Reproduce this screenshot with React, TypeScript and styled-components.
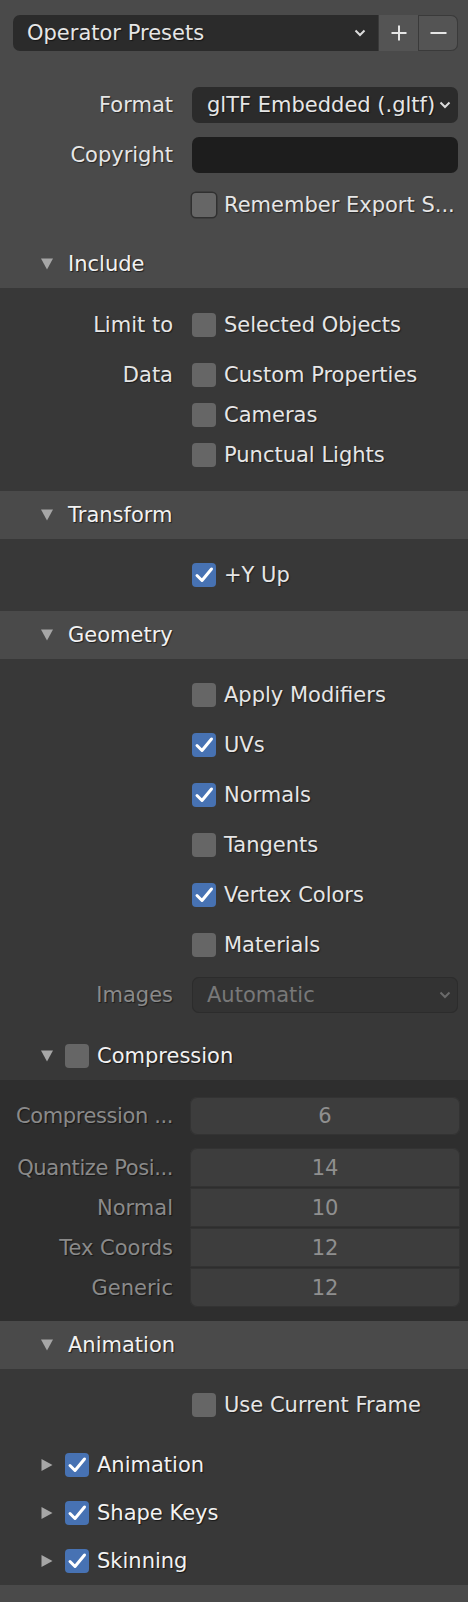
import React from "react";
import styled, { createGlobalStyle, css } from "styled-components";

const GlobalStyle = createGlobalStyle`
  html, body {
    margin: 0;
    padding: 0;
    background: #4a4a4a;
  }
  body {
    font-family: "DejaVu Sans", "Noto Sans", sans-serif;
    font-size: 21px;
    color: #e6e6e6;
  }
`;

const Page = styled.div`
  width: 468px;
  display: flex;
  flex-direction: column;
  background: #4a4a4a;
`;

const TopArea = styled.div`
  padding: 15px 10px 17px 13px;
  display: flex;
  flex-direction: column;
`;

const PresetBar = styled.div`
  display: flex;
  height: 36px;
  margin-bottom: 36px;
`;

const PresetSelect = styled.div`
  flex: 1;
  display: flex;
  align-items: center;
  justify-content: space-between;
  padding: 0 12px 0 14px;
  background: #2b2b2b;
  border-radius: 7px 0 0 7px;
  text-shadow: 1px 1px 1px rgba(0, 0, 0, 0.5);
`;

const PresetButton = styled.div<{ $last?: boolean }>`
  width: 39px;
  display: flex;
  align-items: center;
  justify-content: center;
  background: #545454;
  border-left: 1px solid #3a3a3a;
  ${(p) =>
    p.$last &&
    css`
      border-radius: 0 7px 7px 0;
      box-shadow: inset -1px 0 0 #3a3a3a, inset 0 1px 0 #3a3a3a, inset 0 -1px 0 #3a3a3a;
    `}
`;

const PropRow = styled.div<{ $h?: number; $gap?: number }>`
  display: grid;
  grid-template-columns: 160px 1fr;
  column-gap: 19px;
  align-items: center;
  height: ${(p) => p.$h ?? 36}px;
  margin-bottom: ${(p) => p.$gap ?? 0}px;
`;

const Label = styled.div<{ $disabled?: boolean; $tight?: boolean }>`
  text-align: right;
  white-space: nowrap;
  color: ${(p) => (p.$disabled ? "#8a8a8a" : "#e6e6e6")};
  letter-spacing: ${(p) => (p.$tight ? "-0.4px" : "normal")};
  text-shadow: 1px 1px 1px rgba(0, 0, 0, 0.5);
`;

const Dropdown = styled.div<{ $disabled?: boolean }>`
  height: 36px;
  display: flex;
  align-items: center;
  justify-content: space-between;
  padding: 0 7px 0 15px;
  border-radius: 7px;
  white-space: nowrap;
  background: ${(p) => (p.$disabled ? "#333333" : "#2b2b2b")};
  color: ${(p) => (p.$disabled ? "#787878" : "#e6e6e6")};
  box-shadow: ${(p) => (p.$disabled ? "inset 0 0 0 1px #2c2c2c" : "none")};
  text-shadow: ${(p) => (p.$disabled ? "none" : "1px 1px 1px rgba(0,0,0,0.5)")};
`;

const TextField = styled.div`
  height: 36px;
  border-radius: 7px;
  background: #1d1d1d;
`;

const CheckRow = styled.div<{ $h?: number }>`
  display: flex;
  align-items: center;
  gap: 8px;
  height: ${(p) => p.$h ?? 36}px;
  white-space: nowrap;
  text-shadow: 1px 1px 1px rgba(0, 0, 0, 0.5);
`;

const Box = styled.div<{ $checked?: boolean; $outlined?: boolean }>`
  width: 24px;
  height: 24px;
  flex: none;
  border-radius: 4px;
  display: flex;
  align-items: center;
  justify-content: center;
  background: ${(p) => (p.$checked ? "#4772b3" : "#666666")};
  box-shadow: ${(p) => (p.$outlined ? "0 0 0 1.5px #303030" : "none")};
`;

const SectionHeader = styled.div<{ $light?: boolean }>`
  height: 48px;
  display: flex;
  align-items: center;
  padding-left: 41px;
  background: ${(p) => (p.$light ? "#4a4a4a" : "transparent")};
  color: #f2f2f2;
  text-shadow: 1px 1px 1px rgba(0, 0, 0, 0.6);
  white-space: nowrap;
`;

const HeaderTitle = styled.span<{ $offset: number }>`
  margin-left: ${(p) => p.$offset}px;
`;

const HeaderBox = styled(Box)`
  margin-left: 12px;
`;

const SectionBody = styled.div<{ $bg?: string; $pad?: string }>`
  background: ${(p) => p.$bg ?? "#383838"};
  padding: ${(p) => p.$pad ?? "0"};
  display: flex;
  flex-direction: column;
`;

const FieldArea = styled.div`
  padding: 0 10px 0 13px;
  display: flex;
  flex-direction: column;
`;

const NumberField = styled.div<{ $pos: "single" | "first" | "mid" | "last" }>`
  height: ${(p) => (p.$pos === "single" ? 38 : 39)}px;
  display: flex;
  align-items: center;
  justify-content: center;
  background: #3d3d3d;
  color: #8f8f8f;
  margin-right: -2px;
  margin-left: -2px;
  box-shadow: inset 0 0 0 1px #333333;
  border-radius: ${(p) =>
    p.$pos === "single"
      ? "7px"
      : p.$pos === "first"
      ? "7px 7px 0 0"
      : p.$pos === "last"
      ? "0 0 7px 7px"
      : "0"};
`;

const NumberGroup = styled.div`
  display: flex;
  flex-direction: column;
  gap: 1px;
`;

const Chevron = ({ color = "#dcdcdc" }: { color?: string }) => (
  <svg width="12" height="8" viewBox="0 0 12 8">
    <polyline points="1.5,1.5 6,6 10.5,1.5" fill="none" stroke={color} strokeWidth="2" />
  </svg>
);

const Tick = () => (
  <svg width="24" height="24" viewBox="0 0 24 24">
    <path d="M5 12.5 L10 17.5 L19.5 6" fill="none" stroke="#ffffff" strokeWidth="3" strokeLinecap="round" strokeLinejoin="round" />
  </svg>
);

const Disclosure = ({ open }: { open: boolean }) => (
  <svg width="12" height="12" viewBox="0 0 12 12">
    {open ? <polygon points="0,0.5 12,0.5 6,11.5" fill="#a6a6a6" /> : <polygon points="0.5,0 11.5,6 0.5,12" fill="#a6a6a6" />}
  </svg>
);

function Checkbox({ label, checked, outlined, h }: { label: string; checked?: boolean; outlined?: boolean; h?: number }) {
  return (
    <CheckRow $h={h}>
      <Box $checked={checked} $outlined={outlined}>{checked && <Tick />}</Box>
      {label}
    </CheckRow>
  );
}

function Header({ title, light = true, open = true, toggle }: { title: string; light?: boolean; open?: boolean; toggle?: boolean }) {
  return (
    <SectionHeader $light={light}>
      <Disclosure open={open} />
      {toggle !== undefined && <HeaderBox $checked={toggle}>{toggle && <Tick />}</HeaderBox>}
      <HeaderTitle $offset={toggle !== undefined ? 8 : 15}>{title}</HeaderTitle>
    </SectionHeader>
  );
}

const geometry = [
  { label: "Apply Modifiers", checked: false },
  { label: "UVs", checked: true },
  { label: "Normals", checked: true },
  { label: "Tangents", checked: false },
  { label: "Vertex Colors", checked: true },
  { label: "Materials", checked: false },
];

const quantize = [
  { label: "Quantize Posi...", value: 14 },
  { label: "Normal", value: 10 },
  { label: "Tex Coords", value: 12 },
  { label: "Generic", value: 12 },
];

export default function App() {
  return (
    <Page>
      <GlobalStyle />
      <TopArea>
        <PresetBar>
          <PresetSelect>
            Operator Presets
            <Chevron />
          </PresetSelect>
          <PresetButton>
            <svg width="16" height="16" viewBox="0 0 16 16">
              <path d="M8 0.5 V15.5 M0.5 8 H15.5" stroke="#e6e6e6" strokeWidth="2" />
            </svg>
          </PresetButton>
          <PresetButton $last>
            <svg width="17" height="16" viewBox="0 0 17 16">
              <path d="M0.5 8 H16.5" stroke="#e6e6e6" strokeWidth="2" />
            </svg>
          </PresetButton>
        </PresetBar>
        <PropRow $gap={14}>
          <Label>Format</Label>
          <Dropdown>
            glTF Embedded (.gltf)
            <Chevron />
          </Dropdown>
        </PropRow>
        <PropRow $gap={14}>
          <Label>Copyright</Label>
          <TextField />
        </PropRow>
        <PropRow>
          <span />
          <Checkbox label="Remember Export S..." outlined />
        </PropRow>
      </TopArea>

      <Header title="Include" />
      <SectionBody $pad="17px 10px 16px 13px">
        <PropRow $h={40} $gap={10}>
          <Label>Limit to</Label>
          <Checkbox label="Selected Objects" h={40} />
        </PropRow>
        <PropRow $h={40}>
          <Label>Data</Label>
          <Checkbox label="Custom Properties" h={40} />
        </PropRow>
        <PropRow $h={40}>
          <span />
          <Checkbox label="Cameras" h={40} />
        </PropRow>
        <PropRow $h={40}>
          <span />
          <Checkbox label="Punctual Lights" h={40} />
        </PropRow>
      </SectionBody>

      <Header title="Transform" />
      <SectionBody $pad="16px 10px 16px 13px">
        <PropRow $h={40}>
          <span />
          <Checkbox label="+Y Up" checked h={40} />
        </PropRow>
      </SectionBody>

      <Header title="Geometry" />
      <SectionBody $pad="18px 0 0 0">
        <FieldArea>
          {geometry.map((g) => (
            <PropRow key={g.label} $gap={14}>
              <span />
              <Checkbox label={g.label} checked={g.checked} />
            </PropRow>
          ))}
          <PropRow $gap={19}>
            <Label $disabled>Images</Label>
            <Dropdown $disabled>
              Automatic
              <Chevron color="#6a6a6a" />
            </Dropdown>
          </PropRow>
        </FieldArea>
        <Header title="Compression" light={false} toggle={false} />
        <SectionBody $bg="#2e2e2e" $pad="17px 10px 14px 13px">
          <PropRow $h={38} $gap={13}>
            <Label $disabled $tight>Compression ...</Label>
            <NumberField $pos="single">6</NumberField>
          </PropRow>
          <NumberGroup>
            {quantize.map((q, i) => (
              <PropRow key={q.label} $h={39}>
                <Label $disabled $tight={i === 0}>{q.label}</Label>
                <NumberField $pos={i === 0 ? "first" : i === quantize.length - 1 ? "last" : "mid"}>{q.value}</NumberField>
              </PropRow>
            ))}
          </NumberGroup>
        </SectionBody>
      </SectionBody>

      <Header title="Animation" />
      <SectionBody $pad="18px 0 0 0">
        <FieldArea>
          <PropRow $gap={18}>
            <span />
            <Checkbox label="Use Current Frame" />
          </PropRow>
        </FieldArea>
        <Header title="Animation" light={false} open={false} toggle />
        <Header title="Shape Keys" light={false} open={false} toggle />
        <Header title="Skinning" light={false} open={false} toggle />
      </SectionBody>
      <SectionBody $bg="#4a4a4a" $pad="17px 0 0 0" />
    </Page>
  );
}
